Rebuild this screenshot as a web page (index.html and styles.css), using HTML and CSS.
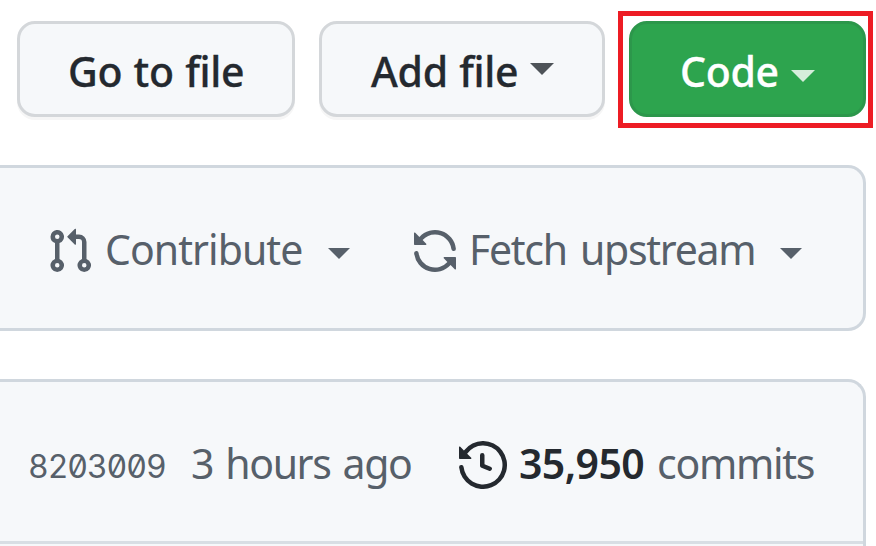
FILE: index.html
```html
<!DOCTYPE html>
<html lang="en">
<head>
<meta charset="utf-8">
<title>Repository</title>
<link rel="stylesheet" href="styles.css">
</head>
<body>
<nav class="actions">
  <button class="btn btn-go"><span class="label label-go">Go to file</span></button>
  <button class="btn btn-add"><span class="label label-add">Add file</span><span class="caret caret-add"></span></button>
  <div class="highlight">
    <button class="btn btn-code"><span class="label label-code">Code</span><span class="caret caret-code"></span></button>
  </div>
</nav>
<section class="panel sync">
  <svg class="icon" viewBox="0 0 16 16"><path d="M7.177 3.073L9.573.677A.25.25 0 0110 .854v4.792a.25.25 0 01-.427.177L7.177 3.427a.25.25 0 010-.354zM3.75 2.5a.75.75 0 100 1.5.75.75 0 000-1.5zm-2.25.75a2.25 2.25 0 113 2.122v5.256a2.251 2.251 0 11-1.5 0V5.372A2.25 2.25 0 011.5 3.25zM11 2.5h-1V4h1a1 1 0 011 1v5.628a2.251 2.251 0 101.5 0V5A2.5 2.5 0 0011 2.5zm1 10.25a.75.75 0 111.5 0 .75.75 0 01-1.5 0zM3.75 12a.75.75 0 100 1.5.75.75 0 000-1.5z"/></svg>
  <span class="text text-contribute">Contribute</span><span class="caret caret-small"></span>
  <svg class="icon icon-sync" viewBox="0 0 16 16"><path d="M8 2.5a5.487 5.487 0 00-4.131 1.869l1.204 1.204A.25.25 0 014.896 6H1.25A.25.25 0 011 5.75V2.104a.25.25 0 01.427-.177l1.38 1.38A7.001 7.001 0 0114.95 7.16a.75.75 0 11-1.49.178A5.501 5.501 0 008 2.5zM1.705 8.005a.75.75 0 01.834.656 5.501 5.501 0 009.592 2.97l-1.204-1.204a.25.25 0 01.177-.427h3.646a.25.25 0 01.25.25v3.646a.25.25 0 01-.427.177l-1.38-1.38A7.001 7.001 0 011.05 8.84a.75.75 0 01.656-.834z"/></svg>
  <span class="text text-fetch">Fetch upstream</span><span class="caret caret-small"></span>
</section>
<section class="panel history">
  <div class="commit-bar">
    <span class="text hash">8203009</span>
    <span class="text text-age">3 hours ago</span>
    <svg class="icon icon-history" viewBox="0 0 16 16"><path d="M1.643 3.143L.427 1.927A.25.25 0 000 2.104V5.75c0 .138.112.25.25.25h3.646a.25.25 0 00.177-.427L2.715 4.215a6.5 6.5 0 11-1.18 4.458.75.75 0 10-1.493.154 8.001 8.001 0 101.6-5.684zM7.75 4a.75.75 0 01.75.75v2.992l2.028.812a.75.75 0 01-.557 1.392l-2.5-1A.75.75 0 017 8.25v-3.5A.75.75 0 017.75 4z"/></svg>
    <strong class="text text-count">35,950</strong>
    <span class="text text-commits">commits</span>
  </div>
</section>
</body>
</html>
```
FILE: styles.css
```css
* { box-sizing: border-box; }
body {
  margin: 0;
  width: 876px;
  height: 546px;
  overflow: hidden;
  background: #fff;
  color: #57606a;
  font-family: "Noto Sans", "Open Sans", sans-serif;
  font-size: 41px;
}
.actions {
  display: flex;
  align-items: flex-start;
  height: 165px;
  padding: 11px 0 0 17px;
}
.btn {
  display: flex;
  align-items: center;
  height: 96px;
  margin: 10px 0 0;
  padding: 0;
  border: 3px solid #d4d7da;
  border-radius: 18px;
  background: #f6f8fa;
  box-shadow: 0 3px 0 rgba(27, 31, 36, .04);
  color: #24292f;
  font: 500 41px/60px "Noto Sans", "Open Sans", sans-serif;
  letter-spacing: -.3px;
  word-spacing: 1px;
  -webkit-text-stroke: .3px currentColor;
}
.btn-go { width: 278px; padding-left: 48px; }
.btn-add { width: 286px; margin-left: 24px; padding-left: 49px; }
.highlight {
  width: 255px;
  height: 117px;
  margin-left: 13px;
  padding: 5px 2px 6px 6px;
  border: 5px solid #ed1c24;
}
.btn-code {
  width: 237px;
  margin: 0;
  padding-left: 48px;
  border-color: #2c974b;
  background: #2da44e;
  box-shadow: none;
  color: #fff;
}
.label, .text { flex: none; white-space: nowrap; text-align: left; }
.label { padding-top: 3px; }
.label-go { width: 180px; }
.label-add { width: 159px; }
.label-code { width: 111px; }
.caret {
  flex: none;
  width: 24px;
  height: 12px;
  background: currentColor;
  clip-path: polygon(0 0, 100% 0, 50% 100%);
}
.caret-add { opacity: .8; }
.caret-code { margin-top: 14px; opacity: .8; }
.caret-small { width: 22px; height: 11px; margin-top: 11px; }
.panel {
  width: 866px;
  border: 3px solid #d0d7de;
  border-left: 0;
  border-radius: 0 18px 18px 0;
  background: #f6f8fa;
}
.sync {
  display: flex;
  align-items: center;
  height: 166px;
  padding: 0 0 0 46px;
}
.icon { flex: none; width: 48px; height: 48px; margin-top: 6px; fill: currentColor; }
.sync .icon { margin-top: 5px; }
.text { letter-spacing: -1.1px; }
.sync .text { padding-top: 2px; }
.text-contribute { width: 223px; margin-left: 11px; letter-spacing: -.95px; }
.icon-sync { margin-left: 61px; }
.text-fetch { width: 311px; margin-left: 10px; letter-spacing: -1.3px; word-spacing: 4px; }
.history {
  height: 190px;
  margin-top: 48px;
  border-bottom: 0;
  border-radius: 0 18px 0 0;
}
.commit-bar {
  display: flex;
  align-items: center;
  height: 162px;
  padding-left: 28px;
  border-bottom: 3px solid #d8dee4;
}
.hash {
  width: 163px;
  margin-top: 10px;
  font-family: Inter, sans-serif;
  font-size: 32px;
  font-feature-settings: "zero", "tnum";
}
.text-age, .text-count, .text-commits { padding-top: 2px; }
.text-age { width: 268px; letter-spacing: -1.4px; word-spacing: 3px; }
.icon-history { color: #24292f; margin-top: 7px; }
.text-count { width: 138px; margin-left: 12px; color: #24292f; font-weight: 600; letter-spacing: -.6px; }
.text-commits { letter-spacing: -1.3px; }
```
